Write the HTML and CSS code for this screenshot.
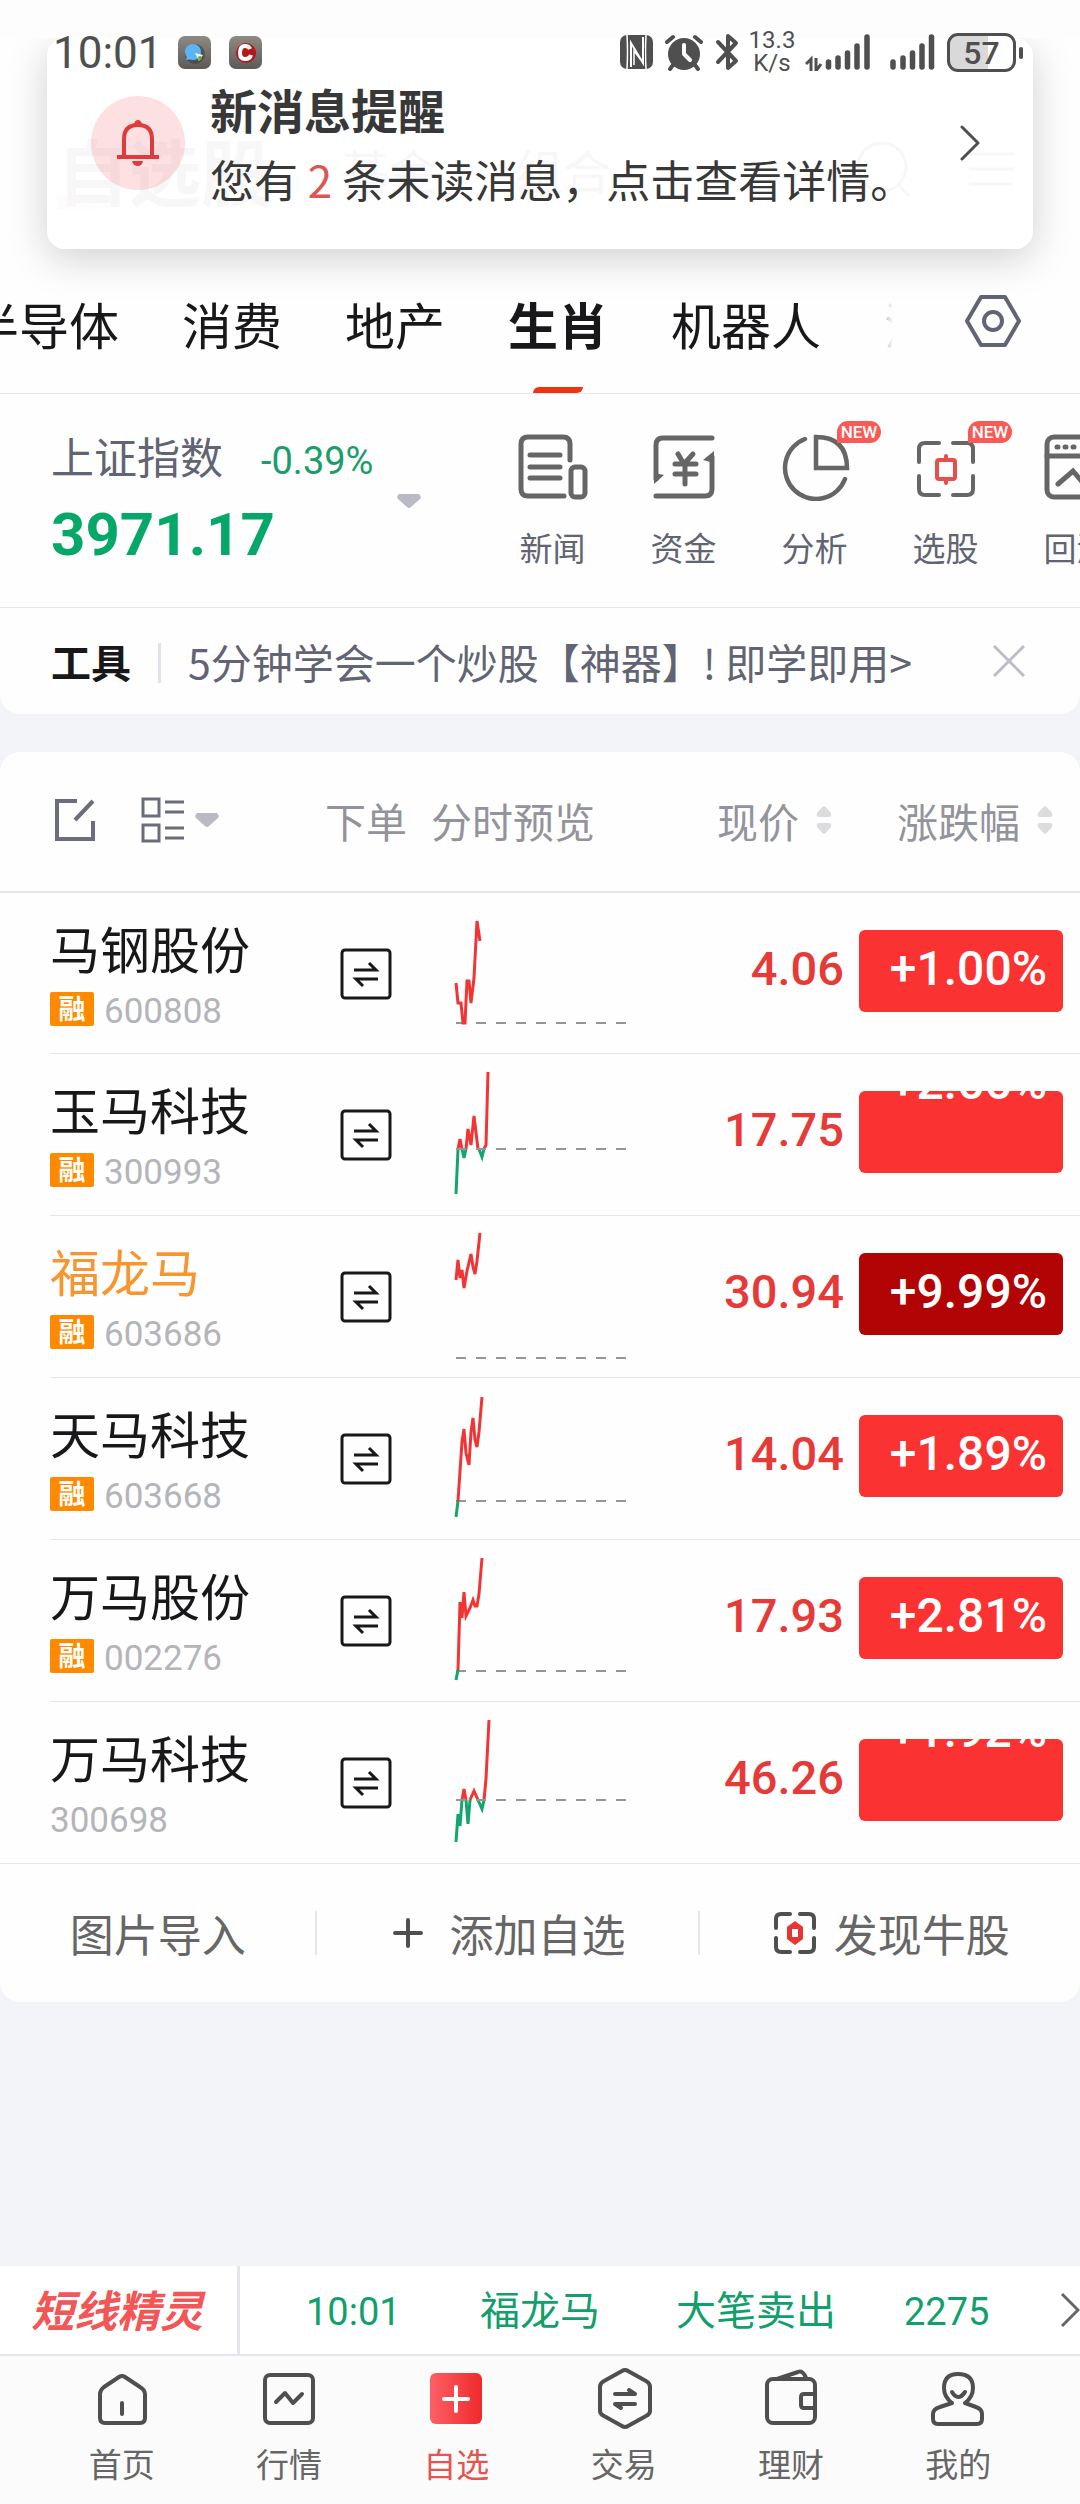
FILE: index.html
```html
<!DOCTYPE html>
<html lang="zh-CN">
<head>
<meta charset="utf-8">
<meta name="viewport" content="width=device-width, initial-scale=1">
<title>自选股</title>
<link rel="stylesheet" href="styles.css">
</head>
<body>
<svg class="defs" aria-hidden="true">
  <symbol id="trade" viewBox="0 0 52 52"><rect x="2" y="2" width="48" height="48" rx="3" fill="none" stroke="#18181a" stroke-width="3"/><path d="M14 22H36L29 15M38 31H16L23 38" fill="none" stroke="#18181a" stroke-width="3"/></symbol>
  <symbol id="caret" viewBox="0 0 24 14"><path d="M2 0H22Q25 3 23 5L14 13Q12 15 10 13L1 5Q-1 3 2 0Z" fill="#b9bac6"/></symbol>
  <symbol id="sort" viewBox="0 0 16 30"><path d="M8 1Q9 1 15 8Q16 12 13 12H3Q0 12 1 8Q7 1 8 1ZM8 29Q9 29 15 22Q16 18 13 18H3Q0 18 1 22Q7 29 8 29Z" fill="#dcdcde"/></symbol>
</svg>

<div class="status">
  <span class="clock num">10:01</span>
  <svg class="app" viewBox="0 0 33 33"><defs><linearGradient id="g" x2="0" y2="1"><stop stop-color="#8f8a82"/><stop offset="1" stop-color="#5d5956"/></linearGradient></defs><rect width="33" height="33" rx="7" fill="url(#g)"/><circle cx="17" cy="18" r="10" fill="#3c4046" opacity=".6"/><circle cx="15" cy="16" r="8" fill="#5db4f5"/><path d="M9 20L8 24L14 23" fill="#5db4f5"/><path d="M17 17L25 19L21 25Z" fill="#f3f6e4"/><circle cx="22" cy="22" r="2" fill="#69a83e"/></svg>
  <svg class="app" viewBox="0 0 33 33"><rect width="33" height="33" rx="7" fill="url(#g)"/><circle cx="17" cy="17" r="10" fill="#b4161a"/><path d="M21 13Q20 10 16 10Q11 10 11 17Q11 23 16 23Q21 23 22 19" fill="none" stroke="#fff" stroke-width="4"/></svg>
  <span class="fill"></span>
  <svg class="nfc" viewBox="0 0 33 34"><rect width="33" height="34" rx="7" fill="#4f4f50"/><path d="M7 0Q8 17 7 34M26 0Q25 17 26 34" fill="none" stroke="#fff" stroke-width="1.500"/><path d="M9 0L25 34V14L8 0Z" fill="#4f4f50"/><path d="M11 32V8L23 28V2" fill="none" stroke="#fff" stroke-width="2"/><path d="M14 30V16L21 25" fill="none" stroke="#fff" stroke-width="1.500"/></svg>
  <svg class="alarm" viewBox="0 0 38 37"><circle cx="19" cy="20" r="16" fill="#4f4f50"/><path d="M2 8L8 3M36 8L30 3M8 31L5 35M30 31L33 35" stroke="#4f4f50" stroke-width="4" stroke-linecap="round"/><path d="M19 11V20L25 26" fill="none" stroke="#fff" stroke-width="4" stroke-linecap="round" stroke-linejoin="round"/></svg>
  <svg class="bt" viewBox="0 0 24 38"><path d="M3 9L21 28L13 35V3L21 10L3 29" fill="none" stroke="#4f4f50" stroke-width="4" stroke-linejoin="round" stroke-linecap="round"/></svg>
  <span class="speed num">13.3<br>K/s</span>
  <svg class="sig1" viewBox="0 0 66 38"><path d="M1 31L6 26V38M11 25V38L16 31" fill="none" stroke="#4f4f50" stroke-width="3"/><path d="M23.500 29V34M33 25V34M42.500 20V34M52 13V34M62 4V34" stroke="#4f4f50" stroke-width="5.500" stroke-linecap="round"/></svg>
  <svg class="sig2" viewBox="0 0 45 38"><path d="M3 29V34M13 25V34M22.500 20V34M32 13V34M41.500 4V34" stroke="#4f4f50" stroke-width="5.500" stroke-linecap="round"/></svg>
  <span class="battery num">57</span>
</div>

<main class="page">
  <section class="top">
    <header class="titlebar">
      <h1>自选股</h1><a href="#" class="fund">基金</a><a href="#" class="group">组合</a>
      <span class="fill"></span>
      <svg class="search" viewBox="0 0 56 58"><circle cx="25" cy="27" r="24" fill="none" stroke="#222" stroke-width="3"/><path d="M42 45L52 56" stroke="#222" stroke-width="3"/></svg>
      <svg class="menu" viewBox="0 0 44 34"><path d="M0 2H44M0 17H44M0 32H44" stroke="#222" stroke-width="3"/></svg>
    </header>
    <nav class="tabs">
      <div class="strip">
        <a href="#">半导体</a><a href="#">消费</a><a href="#">地产</a><a href="#" class="on">生肖</a><a href="#">机器人</a><a href="#">消费</a>
      </div>
      <button class="set" aria-label="分组设置"><svg viewBox="0 0 56 52"><path d="M16 2H40L54 26L40 50H16L2 26Z" fill="none" stroke="#616473" stroke-width="4" stroke-linejoin="round"/><circle cx="28" cy="26" r="9" fill="none" stroke="#616473" stroke-width="4"/></svg></button>
    </nav>

    <div class="index">
      <div class="quote">
        <div class="qname"><span>上证指数</span><span class="num qchg">-0.39%</span></div>
        <strong class="num">3971.17</strong>
      </div>
      <button class="drop" aria-label="切换指数"><svg viewBox="0 0 24 14"><use href="#caret"/></svg></button>
      <div class="tools">
        <a href="#"><svg viewBox="0 0 72 68"><g fill="none" stroke="#666" stroke-width="5" stroke-linecap="round"><path d="M47 63H11Q4 63 4 56V11Q4 4 11 4H46Q53 4 53 11V27"/><path d="M13 22H43M13 34H43M13 45H43"/><rect x="54" y="34" width="14" height="30" rx="4"/></g></svg>新闻</a>
        <a href="#"><svg viewBox="0 0 72 68"><g fill="none" stroke="#666" stroke-width="5" stroke-linecap="round"><path d="M64 5H15Q8 5 8 12V46M8 63H57Q64 63 64 56V24"/><path d="M30 21L36 31L45 21M27 31H48M27 41H48M37 31V51"/></g><path d="M6 51V40L16 42ZM66 18V30L55 27Z" fill="#666"/></svg>资金</a>
        <a href="#"><svg viewBox="0 0 72 68"><g fill="none" stroke="#666" stroke-width="4.500" stroke-linecap="round"><path d="M26 6A31 31 0 1 0 66 46"/><path d="M37 4V35H68Q68 4 37 4Z"/></g></svg><i class="new">NEW</i>分析</a>
        <a href="#"><svg viewBox="0 0 72 68"><g fill="none" stroke="#666" stroke-width="4" stroke-linecap="round"><path d="M29 10H15Q9 10 9 16V29M43 10H57Q63 10 63 16V29M29 62H15Q9 62 9 56V43M43 62H57Q63 62 63 56V43"/></g><g fill="none" stroke="#ea4e4c" stroke-width="4" stroke-linecap="round"><rect x="27" y="27" width="18" height="19" rx="2"/><path d="M36 23V27M36 46V50"/></g></svg><i class="new">NEW</i>选股</a>
        <a href="#"><svg viewBox="0 0 72 68"><g fill="none" stroke="#666" stroke-width="5" stroke-linecap="round"><rect x="6" y="4" width="60" height="60" rx="7"/><path d="M6 23H66M17 51L32 38L42 50L56 38"/><path d="M16 14H17M24 14H25M32 14H33"/></g></svg>回测</a>
      </div>
    </div>

    <div class="tip">
      <b>工具</b>
      <a href="#">5分钟学会一个炒股【神器】! 即学即用&gt;</a>
      <button class="x" aria-label="关闭"><svg viewBox="0 0 32 32"><path d="M1 1L31 31M31 1L1 31" stroke="#bcbdc8" stroke-width="3"/></svg></button>
    </div>
  </section>

  <section class="list">
    <table>
      <colgroup><col class="c1"><col class="c2"><col class="c3"><col><col class="c5"></colgroup>
      <thead><tr>
        <th class="h1"><div class="hicons">
          <button aria-label="编辑"><svg width="40" height="42" viewBox="0 0 40 42"><path d="M22 2H2V40H38V22M20 21L38 2" fill="none" stroke="#6b6d7b" stroke-width="4"/></svg></button>
          <button class="view" aria-label="视图"><svg width="44" height="46" viewBox="0 0 44 46"><path d="M2 2H18V19H2ZM2 28H18V44H2ZM24 5H43M24 15H43M24 31H43M24 41H43" fill="none" stroke="#6b6d7b" stroke-width="3"/></svg><svg width="24" height="14" viewBox="0 0 24 14"><use href="#caret"/></svg></button>
        </div></th>
        <th class="h2">下单</th>
        <th class="h3">分时预览</th>
        <th class="hs"><button>现价<svg class="sort" viewBox="0 0 16 30"><use href="#sort"/></svg></button></th>
        <th class="hs"><button>涨跌幅<svg class="sort" viewBox="0 0 16 30"><use href="#sort"/></svg></button></th>
      </tr></thead>
      <tbody>
      <tr>
        <td class="name"><div class="stock">马钢股份</div><div class="code"><i>融</i><span class="num">600808</span></div></td>
        <td class="trade"><button aria-label="下单"><svg viewBox="0 0 52 52"><use href="#trade"/></svg></button></td>
        <td class="spark"><svg viewBox="450 0 180 161"><path class="base" d="M456 130H628"/><path class="up" d="M456 90L458 110H461L463 130H465L467 88H469L471 110L474 85L477 28L480 48"/></svg></td>
        <td class="price num">4.06</td>
        <td class="chg num"><span>+1.00%</span></td>
      </tr>
      <tr>
        <td class="name"><div class="stock">玉马科技</div><div class="code"><i>融</i><span class="num">300993</span></div></td>
        <td class="trade"><button aria-label="下单"><svg viewBox="0 0 52 52"><use href="#trade"/></svg></button></td>
        <td class="spark"><svg viewBox="450 0 180 161"><path class="down" d="M456 140L458 95M462 95L464 104L466 95M479 95L482 103L484 95"/><path class="up" d="M458 95L460 85L462 95M466 95L468 75L471 91L474 62L478 95M484 95L486 91L488 18"/><path class="base" d="M456 95H628"/></svg></td>
        <td class="price num">17.75</td>
        <td class="chg num roll"><span>+2.66%</span></td>
      </tr>
      <tr>
        <td class="name"><div class="stock hot">福龙马</div><div class="code"><i>融</i><span class="num">603686</span></div></td>
        <td class="trade"><button aria-label="下单"><svg viewBox="0 0 52 52"><use href="#trade"/></svg></button></td>
        <td class="spark"><svg viewBox="450 0 180 161"><path class="base" d="M456 142H628"/><path class="up" d="M456 64L458 44L460 62L462 54L464 72L467 55L471 38L473 51L475 58L477 45L480 17"/></svg></td>
        <td class="price num">30.94</td>
        <td class="chg num limit"><span>+9.99%</span></td>
      </tr>
      <tr>
        <td class="name"><div class="stock">天马科技</div><div class="code"><i>融</i><span class="num">603668</span></div></td>
        <td class="trade"><button aria-label="下单"><svg viewBox="0 0 52 52"><use href="#trade"/></svg></button></td>
        <td class="spark"><svg viewBox="450 0 180 161"><path class="base" d="M456 123H628"/><path class="down" d="M456 139L458 123"/><path class="up" d="M458 123L462 64L464 51L466 75L469 87L471 54L473 40L475 62L477 69L479 54L482 19"/></svg></td>
        <td class="price num">14.04</td>
        <td class="chg num"><span>+1.89%</span></td>
      </tr>
      <tr>
        <td class="name"><div class="stock">万马股份</div><div class="code"><i>融</i><span class="num">002276</span></div></td>
        <td class="trade"><button aria-label="下单"><svg viewBox="0 0 52 52"><use href="#trade"/></svg></button></td>
        <td class="spark"><svg viewBox="450 0 180 161"><path class="base" d="M456 131H628"/><path class="down" d="M456 140L458 130"/><path class="up" d="M458 130L460 62L462 78L464 52L466 76L470 68L473 60L475 66H477L479 54L482 18"/></svg></td>
        <td class="price num">17.93</td>
        <td class="chg num"><span>+2.81%</span></td>
      </tr>
      <tr>
        <td class="name"><div class="stock">万马科技</div><div class="code"><span class="num">300698</span></div></td>
        <td class="trade"><button aria-label="下单"><svg viewBox="0 0 52 52"><use href="#trade"/></svg></button></td>
        <td class="spark"><svg viewBox="450 0 180 161"><path class="down" d="M456 140L458 112L460 124L462 98M466 98L468 122L470 98M478 98L482 107L484 98"/><path class="up" d="M462 98L464 87L466 98M470 98L474 89L478 98M484 98L486 77L489 18"/><path class="base" d="M456 98H628"/></svg></td>
        <td class="price num">46.26</td>
        <td class="chg num roll"><span>+1.92%</span></td>
      </tr>
      </tbody>
    </table>
    <div class="actions">
      <button>图片导入</button>
      <button><svg width="30" height="30" viewBox="0 0 30 30"><path d="M2 15H28M15 2V28" stroke="#4f4f50" stroke-width="4" stroke-linecap="round"/></svg><span class="add">添加自选</span></button>
      <button><svg width="42" height="42" viewBox="0 0 42 42"><path d="M16 2H7Q2 2 2 7V16M26 2H35Q40 2 40 7V16M16 40H7Q2 40 2 35V26M26 40H35Q40 40 40 35V26" fill="none" stroke="#4f4f50" stroke-width="4" stroke-linecap="round"/><path d="M21 9L29 15V27L21 33L13 27V15Z" fill="#e83432"/><rect x="18" y="17" width="6" height="8" fill="#fff"/></svg><span class="find">发现牛股</span></button>
    </div>
  </section>

  <div class="bottom">
    <div class="ticker">
      <b>短线精灵</b>
      <a href="#"><span class="num t1">10:01</span><span class="t2">福龙马</span><span class="t3">大笔卖出</span><span class="num">2275</span></a>
      <svg width="20" height="36" viewBox="0 0 20 36"><path d="M2 2L18 18L2 34" fill="none" stroke="#666" stroke-width="3"/></svg>
    </div>
    <nav class="nav">
      <a href="#"><svg viewBox="0 0 60 64"><path d="M12 21L27 11Q30 9 33 11L48 21Q53 24 53 28V52Q53 57 48 57H13Q8 57 8 52V28Q8 24 12 21ZM30 37V48" fill="none" stroke="#4f4f50" stroke-width="4" stroke-linecap="round"/></svg>首页</a>
      <a href="#"><svg viewBox="0 0 60 64"><g fill="none" stroke="#4f4f50" stroke-width="4" stroke-linecap="round" stroke-linejoin="round"><rect x="6" y="9" width="48" height="48" rx="5"/><path d="M17 36L26 27L34 37L43 28"/></g></svg>行情</a>
      <a href="#" class="on"><svg viewBox="0 0 60 64"><defs><linearGradient id="r"><stop stop-color="#fb6065"/><stop offset="1" stop-color="#ef2a2c"/></linearGradient></defs><rect x="4" y="7" width="52" height="51" rx="6" fill="url(#r)"/><path d="M18 33H42M30 21V45" stroke="#fff" stroke-width="4" stroke-linecap="round"/></svg>自选</a>
      <a href="#"><svg viewBox="0 0 60 64"><g fill="none" stroke="#4f4f50" stroke-width="4" stroke-linecap="round" stroke-linejoin="round"><path d="M34 5L52 15Q56 17 56 21V45Q56 48 52 50L34 60Q31 62 28 60L10 50Q6 48 6 45V21Q6 17 10 15L28 5Q31 3 34 5Z"/><path d="M21 28H41L35 24M41 38H21L27 42"/></g></svg>交易</a>
      <a href="#"><svg viewBox="0 0 60 64"><g fill="none" stroke="#4f4f50" stroke-width="4" stroke-linecap="round" stroke-linejoin="round"><rect x="6" y="13" width="48" height="44" rx="6"/><path d="M16 13L37 6Q42 4 45 12M54 28H43Q40 28 40 31V39Q40 42 43 42H54"/></g></svg>理财</a>
      <a href="#"><svg viewBox="0 0 60 64"><g fill="none" stroke="#4f4f50" stroke-width="4" stroke-linecap="round" stroke-linejoin="round"><path d="M24 37Q16 31 16 22Q16 8 30 8Q45 8 45 22Q45 31 37 37M24 37L12 41Q5 43 5 48V53Q5 58 10 58H49Q54 58 54 53V48Q54 43 48 41L37 37M24 26Q30 36 37 26"/></g></svg>我的</a>
    </nav>
  </div>
</main>

<div class="layer">
  <a href="#" class="notice">
    <span class="bell"><svg viewBox="0 0 42 46"><path d="M7 37V19Q7 5 21 5Q35 5 35 19V37" fill="none" stroke="#df3b3c" stroke-width="4"/><path d="M0 37H42" stroke="#df3b3c" stroke-width="4"/><path d="M17 4Q18 0 21 0Q24 0 25 4ZM15 41H26Q25 46 21 46Q16 46 15 41Z" fill="#df3b3c"/></svg></span>
    <span class="msg"><b>新消息提醒</b><span>您有 <em>2</em> 条未读消息，点击查看详情。</span></span>
    <svg class="go" viewBox="0 0 20 36"><path d="M2 2L18 18L2 34" fill="none" stroke="#4f4f50" stroke-width="3" stroke-linecap="round" stroke-linejoin="round"/></svg>
  </a>
</div>
</body>
</html>
```

FILE: styles.css
```css
* { box-sizing: border-box; }
body {
  margin: 0;
  display: flex;
  flex-direction: column;
  min-height: 100vh;
  position: relative;
  overflow-x: hidden;
  background: #f3f4f9;
  color: #18181a;
  font-family: "Noto Sans CJK SC", sans-serif;
}
a { color: inherit; text-decoration: none; }
button { font: inherit; color: inherit; border: 0; background: none; padding: 0; }
svg { display: block; flex: none; }
i, em { font-style: normal; }
.defs { position: absolute; width: 0; height: 0; }
.num { font-family: Roboto, "Noto Sans CJK SC", sans-serif; }
.fill { flex: 1; }

/* system status bar, kept above the notification */
.status {
  position: relative;
  z-index: 3;
  display: flex;
  align-items: center;
  height: 104px;
  padding: 0 64px 0 53px;
  background: linear-gradient(#fdfdfd 38px, transparent 38px);
  color: #4f4f50;
}
.clock { width: 125px; padding-top: 2px; font-size: 44px; line-height: 44px; }
.app { width: 33px; height: 33px; margin-right: 18px; }
.nfc { width: 33px; height: 34px; }
.alarm { width: 38px; height: 37px; margin-left: 12px; }
.bt { width: 24px; height: 38px; margin-left: 12px; }
.speed { width: 66px; font-size: 24px; line-height: 23px; text-align: center; }
.sig1 { width: 66px; height: 38px; }
.sig2 { width: 45px; height: 38px; margin: 0 12px 0 19px; }
.battery {
  position: relative;
  width: 69px;
  height: 39px;
  border: 3px solid #4f4f50;
  border-radius: 11px;
  background: linear-gradient(90deg, #d9d9d9 38px, #fff 38px);
  font-size: 32px;
  line-height: 34px;
  font-weight: 500;
  text-align: center;
}
.battery::after {
  content: "";
  position: absolute;
  left: 69px;
  top: 11px;
  width: 4px;
  height: 12px;
  border-radius: 2px;
  background: #4f4f50;
}

.page { flex: 1; display: flex; flex-direction: column; }
.top { margin-top: -104px; padding-top: 104px; background: #fefefe; border-radius: 0 0 20px 20px; }
.titlebar {
  display: flex;
  align-items: center;
  height: 130px;
  padding: 0 67px 0 57px;
  color: #222;
}
.titlebar h1 {
  margin: 0 68px 0 0;
  font-size: 72px;
  line-height: 80px;
  background: linear-gradient(90deg, #ff8a70, transparent 80px) 0 100% / 100% 12px no-repeat;
}
.titlebar a { font-size: 48px; line-height: 72px; }
.titlebar .group { margin-left: 78px; }
.search { width: 56px; height: 58px; margin-right: 56px; }
.menu { width: 44px; height: 34px; }

.tabs {
  display: flex;
  align-items: stretch;
  height: 160px;
  border-bottom: 1px solid #e6e6e9;
}
.strip {
  flex: 0 1 893px;
  display: flex;
  gap: 63px;
  overflow: hidden;
  font-size: 50px;
  line-height: 72px;
  white-space: nowrap;
  -webkit-mask: linear-gradient(90deg, #000 calc(100% - 30px), transparent);
  mask: linear-gradient(90deg, #000 calc(100% - 30px), transparent);
}
.strip a { flex: none; padding-top: 53px; }
.strip a:first-child { margin-left: -31px; }
.strip .on { position: relative; font-weight: 700; }
.strip .on::after {
  content: "";
  position: absolute;
  left: 25px;
  bottom: 0;
  width: 50px;
  height: 6px;
  border-radius: 6px 0;
  background: #ee330e;
}
.set { flex: 1; padding: 14px 0 0 72px; }
.set svg { width: 56px; height: 52px; }

.index {
  display: flex;
  height: 214px;
  overflow: hidden;
  border-bottom: 1px solid #e6e6e9;
}
.quote { flex: none; width: 346px; padding: 33px 0 0 51px; white-space: nowrap; }
.qname { display: flex; align-items: baseline; gap: 38px; height: 60px; font-size: 43px; line-height: 56px; color: #616473; }
.qchg { font-size: 38px; color: #1a9d6c; }
.quote strong { display: block; font-size: 60px; line-height: 80px; margin-top: 8px; color: #05a869; }
.drop { align-self: center; flex: none; width: 141px; padding-left: 51px; }
.drop svg { width: 24px; height: 14px; }
.tools { display: flex; flex: 1; min-width: 0; }
.tools a {
  position: relative;
  flex: none;
  width: 131px;
  display: flex;
  flex-direction: column;
  align-items: center;
  padding-top: 39px;
  gap: 22px;
  font-size: 33px;
  line-height: 48px;
  color: #616473;
}
.tools svg { width: 72px; height: 68px; }
.new {
  position: absolute;
  left: 88px;
  top: 27px;
  width: 44px;
  height: 22px;
  border-radius: 11px 11px 11px 0;
  background: #fa5a55;
  color: #fff;
  font: 500 17px/23px Roboto, sans-serif;
  text-align: center;
}

.tip { display: flex; align-items: center; height: 106px; padding: 0 55px 0 51px; font-size: 40px; line-height: 60px; }
.tip b { padding-right: 30px; background: linear-gradient(#e2e2ea, #e2e2ea) 100% 60% / 3px 40px no-repeat; }
.tip a { flex: 1; padding-left: 27px; font-size: 41px; color: #616473; white-space: nowrap; }
.x svg { width: 32px; height: 32px; }

.list { margin-top: 38px; background: #fefefe; border-radius: 20px; }
table { width: 100%; table-layout: fixed; border-collapse: collapse; }
.c1 { width: 310px; }
.c2 { width: 112px; }
.c3 { width: 220px; }
.c5 { width: 221px; }
th, td { padding: 0; }
thead th { font-size: 41px; line-height: 60px; font-weight: 400; color: #93949b; white-space: nowrap; padding-bottom: 3px; }
thead tr { border-bottom: 2px solid #e5e5eb; height: 140px; }
.hicons { display: flex; align-items: center; padding-left: 55px; gap: 46px; }
.view { display: flex; align-items: center; gap: 10px; }
.h2 { text-align: center; }
.h3 { text-align: left; padding-left: 9px; }
.hs button { display: flex; align-items: center; gap: 17px; margin-left: auto; padding-right: 27px; }
.sort { width: 16px; height: 30px; }

tbody tr {
  height: 162px;
  background: linear-gradient(#e6e6e9, #e6e6e9) 50px 100% / 100% 1px no-repeat;
}
tbody tr:last-child { background-position: 0 100%; }
.name { vertical-align: top; padding: 24px 0 0 50px; }
.stock { font-size: 50px; line-height: 60px; }
.hot { color: #f7962f; }
.code { display: flex; align-items: center; gap: 10px; margin-top: 10px; height: 44px; }
.code i {
  width: 44px;
  height: 34px;
  border-radius: 2px;
  background: #ff8a00;
  color: #fff;
  font-size: 27px;
  line-height: 32px;
  font-weight: 700;
  text-align: center;
}
.code .num { font-size: 35px; line-height: 44px; color: #b4b5ba; padding-top: 6px; }
.trade button { display: block; margin: 0 auto; }
.trade svg { width: 52px; height: 52px; }
.spark { vertical-align: top; }
.spark svg { width: 180px; height: 161px; margin-left: 28px; }
.spark path { fill: none; stroke-width: 3; }
.spark .up { stroke: #f03534; }
.spark .down { stroke: #12a56c; }
.spark .base { stroke: #949499; stroke-width: 2; stroke-dasharray: 10 10; }
.price { padding: 0 15px 10px 0; text-align: right; font-size: 47px; line-height: 60px; font-weight: 500; color: #e63a39; }
.chg { vertical-align: top; padding-top: 37px; }
.chg span {
  display: flex;
  justify-content: flex-end;
  height: 82px;
  margin-right: 17px;
  padding-right: 16px;
  border-radius: 6px;
  overflow: hidden;
  background: #fa3232;
  color: #fff;
  font-size: 48px;
  line-height: 78px;
  font-weight: 500;
}
.limit span { background: #b20404; }
/* the digits are rolling out of the pill */
.roll span { align-items: flex-end; padding-bottom: 51px; }

.actions { display: flex; height: 138px; font-size: 44px; color: #666; }
.actions button { flex: 1 1 382px; display: flex; align-items: center; justify-content: center; line-height: 64px; }
.actions button:first-child { flex-basis: 315px; }
.actions button + button { padding-left: 6px; background: linear-gradient(#e6e6e9, #e6e6e9) 0 50% / 2px 44px no-repeat; }
.add { margin-left: 26px; }
.find { margin-left: 18px; }

.bottom { margin-top: auto; }
.ticker {
  display: flex;
  align-items: center;
  height: 90px;
  background: #fff;
  border-bottom: 2px solid #e5e5eb;
  line-height: 88px;
  white-space: nowrap;
}
.ticker b {
  width: 240px;
  height: 88px;
  border-right: 3px solid #e5e5eb;
  padding-left: 31px;
  font-size: 43px;
  line-height: 84px;
  font-style: italic;
  font-weight: 700;
  color: #f25656;
}
.ticker a { flex: 1; display: flex; align-items: baseline; padding-left: 66px; font-size: 40px; color: #119f6b; }
.ticker .num { font-size: 38px; }
.t1 { width: 174px; }
.t2 { width: 196px; }
.t3 { width: 228px; }

.nav { display: flex; height: 148px; padding: 0 38px; background: #fbfbfb; }
.nav a {
  flex: 1;
  display: flex;
  flex-direction: column;
  align-items: center;
  padding-top: 10px;
  gap: 10px;
  font-size: 33px;
  line-height: 46px;
  color: #666;
}
.nav svg { width: 60px; height: 64px; }
.nav .on { color: #e5554f; }

/* notification card laid over the title bar */
.layer { position: absolute; z-index: 2; top: 38px; left: 0; right: 0; height: 290px; overflow: hidden; pointer-events: none; }
.notice {
  display: flex;
  height: 211px;
  margin: 0 47px;
  padding: 0 53px 0 44px;
  border-radius: 18px;
  background: rgba(255, 255, 255, .965);
  box-shadow: 0 10px 40px rgba(0, 0, 0, .18);
  pointer-events: auto;
}
.bell { flex: none; width: 94px; height: 94px; margin-top: 58px; border-radius: 50%; background: rgba(240, 60, 70, .16); display: flex; align-items: center; justify-content: center; }
.bell svg { width: 42px; height: 46px; }
.msg { flex: 1; display: flex; flex-direction: column; padding: 36px 0 0 25px; color: #383838; white-space: nowrap; font-size: 44px; line-height: 70px; }
.msg b { font-size: 47px; }
.msg em { color: #dc5654; }
.go { width: 20px; height: 36px; margin-top: 87px; }
```
